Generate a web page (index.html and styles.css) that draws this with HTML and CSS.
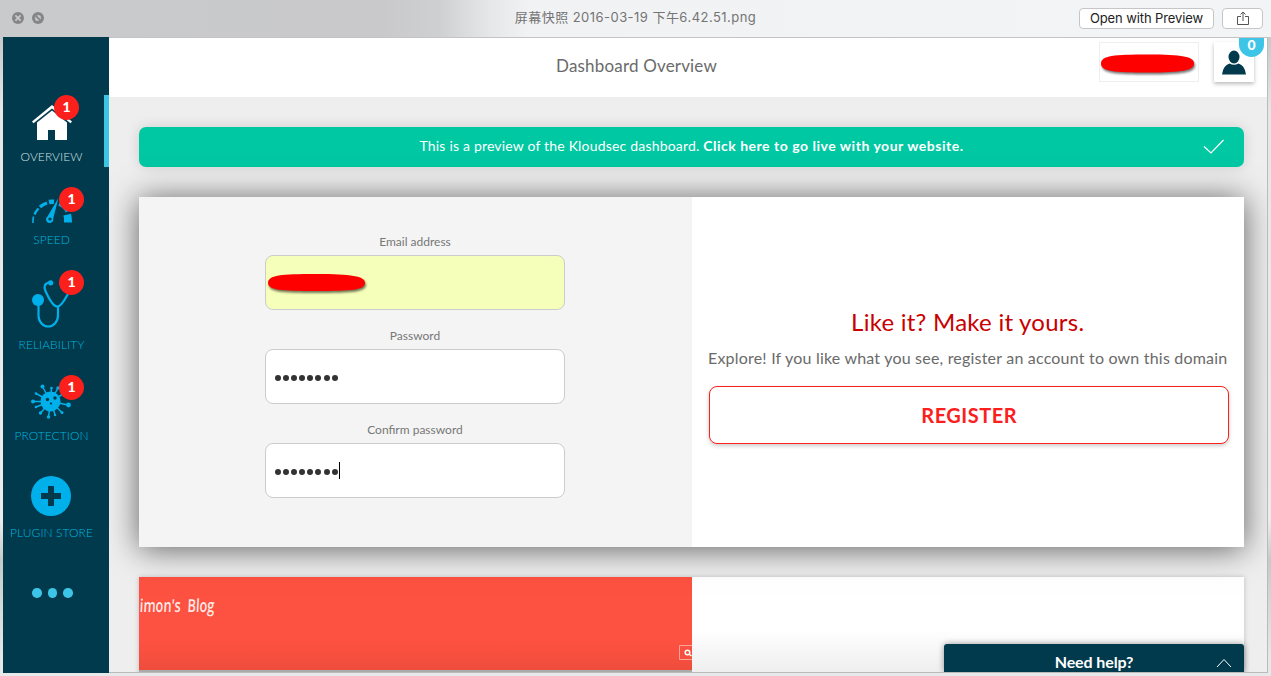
FILE: index.html
```html
<!DOCTYPE html>
<html lang="en">
<head>
<meta charset="utf-8">
<title>Dashboard Overview</title>
<link rel="stylesheet" href="styles.css">
</head>
<body>
<div class="window">
  <header class="titlebar">
    <div class="controls">
      <svg width="12" height="12" viewBox="0 0 12 12"><circle cx="6" cy="6" r="6" fill="#86868a"/><path d="M3.4 3.4l5.2 5.2M8.6 3.4L3.4 8.6" stroke="#cbcbcd" stroke-width="1.6"/></svg>
      <svg width="12" height="12" viewBox="0 0 12 12"><circle cx="6" cy="6" r="6" fill="#86868a"/><path d="M4.6 3.2h2.6a1.6 1.6 0 0 1 1.6 1.6v2.6zM3.2 4.6v2.6a1.6 1.6 0 0 0 1.6 1.6h2.6z" fill="#cbcbcd"/></svg>
    </div>
    <div class="filename">屏幕快照 2016-03-19 下午6.42.51.png</div>
    <div class="actions">
      <button class="tool open">Open with Preview</button>
      <button class="tool share"><svg width="12" height="15" viewBox="0 0 12 15" fill="none" stroke="#555" stroke-width="1"><path d="M4 5.5H.5v8h11v-8H8M6 10V1M3.500 3.500L6 1l2.500 2.500"/></svg></button>
    </div>
  </header>

  <div class="app">
    <nav class="sidebar">
      <a class="item overview">
        <svg width="40" height="37" viewBox="0 0 40 37"><path d="M20 1L0 17.500l1.500 1.800L20 4.500l18.500 14.800L40 17.500z" fill="#fff"/><path d="M20 6.500L5 18.500V36h11V26h7v10h12V18.500z" fill="#fff"/></svg>
        <span class="label">OVERVIEW</span><b class="badge">1</b>
      </a>
      <a class="item speed">
        <svg width="40" height="25" viewBox="0 0 40 25"><g fill="none" stroke="#00b0ea"><path d="M1 25Q.8 21.500 1.500 18.500" stroke-width="1.600"/><path d="M2.500 16.500Q4 13 6.500 10.500" stroke-width="2.400"/><path d="M8 9Q11 6.300 15 5" stroke-width="3.400"/><path d="M17 4Q19.500 3.500 22 3.800" stroke-width="4.400"/><path d="M27.500 5Q33 7 36.500 13" stroke-width="6"/></g><path d="M31.500 17.500l7.500-1.800q1 4 1 8.800h-8q.2-4-.5-7z" fill="#00b0ea"/><path d="M26.500 0L15.500 18.500a3.600 3.600 0 1 0 5.700 2z" fill="#00b0ea"/><circle cx="18" cy="21" r="1.600" fill="#003a4c"/></svg>
        <span class="label">SPEED</span><b class="badge">1</b>
      </a>
      <a class="item reliability">
        <svg width="40" height="48" viewBox="0 0 40 48"><g fill="none" stroke="#00b0ea" stroke-width="2.200"><path d="M6.500 21v14.500c0 6 4.200 11 9.700 11s9.800-5 9.800-11V27M18 2.500C12.500 3 11.500 6.500 13.500 11C17 19 21.500 26.500 25.500 26.500C30 26.500 33.500 18 36.500 13"/></g><circle cx="6" cy="20" r="6" fill="#00b0ea"/><circle cx="18.700" cy="2.800" r="2.600" fill="#00b0ea"/></svg>
        <span class="label">RELIABILITY</span><b class="badge">1</b>
      </a>
      <a class="item protection">
        <svg width="40" height="35" viewBox="0 0 40 35"><g stroke="#00b0ea" stroke-width="1.500"><path d="M19.500 17.500L11.500 2.500M19.500 17.500L20.500 4M19.500 17.500L27 4M19.500 17.500L32 10M19.500 17.500L37.500 21M19.500 17.500L31 28.500M19.500 17.500L24 30.500M19.500 17.500L17.500 33M19.500 17.500L9.500 29M19.500 17.500L5 23M19.500 17.500L1.500 17.500M19.500 17.500L5 9.500"/></g><g fill="#00b0ea"><circle cx="19.500" cy="17.500" r="10"/><circle cx="11.500" cy="2.500" r="2"/><circle cx="20.500" cy="4" r="1.300"/><circle cx="27" cy="4" r="1.700"/><circle cx="37.500" cy="21" r="2.400"/><circle cx="31" cy="28.500" r="1.500"/><circle cx="24" cy="31" r="1.200"/><circle cx="17.500" cy="33" r="1.700"/><circle cx="9.500" cy="29" r="1.700"/><circle cx="5" cy="23" r="1.300"/><circle cx="2" cy="17.500" r="2"/><circle cx="5" cy="9.500" r="1.300"/></g><g fill="#003a4c"><circle cx="16.500" cy="15.500" r="1.700"/><circle cx="24" cy="14" r="1.700"/><circle cx="20" cy="19.500" r="1.100"/></g></svg>
        <span class="label">PROTECTION</span><b class="badge">1</b>
      </a>
      <a class="item plugins">
        <svg width="40" height="40" viewBox="0 0 40 40"><circle cx="20" cy="20" r="20" fill="#00b0ea"/><path d="M17 10h6v7h7v6h-7v7h-6v-7h-7v-6h7z" fill="#003a4c"/></svg>
        <span class="label">PLUGIN STORE</span>
      </a>
      <div class="more"><i></i><i></i><i></i></div>
    </nav>

    <main class="page">
      <div class="topbar">
        <h1>Dashboard Overview</h1>
        <div class="account"><svg width="98" height="26" viewBox="0 0 98 26"><path class="scribble" d="M1 12.500C1 4.500 14 3.500 48 3.500S94 5.500 94 12.500S82 21.500 48 21.500S1 20.500 1 12.500z"/></svg></div>
        <div class="user"><svg width="24" height="25" viewBox="0 0 24 25"><ellipse cx="12" cy="7" rx="5.500" ry="6.500" fill="#003a4c"/><path d="M0 24.500Q1 15.500 7.500 13.500Q12 16 16.500 13.500Q23 15.500 24 24.500z" fill="#003a4c"/></svg><b class="count">0</b></div>
      </div>

      <div class="content">
        <div class="banner">
          <p><span class="lead">This is a preview of the Kloudsec dashboard.</span> <strong>Click here to go live with your website.</strong></p>
          <svg width="22" height="16" viewBox="0 0 22 16" fill="none" stroke="#fff" stroke-width="1.200"><path d="M1 7.500l7 6.500L20.500 1"/></svg>
        </div>

        <section class="signup">
          <form class="fields">
            <label>Email address</label>
            <div class="input filled"><svg width="104" height="24" viewBox="0 0 104 24"><path class="scribble" d="M2 12C2 4 15 3 50 3S99 5 99 12S85 20 50 20S2 19 2 12z"/></svg></div>
            <label>Password</label>
            <div class="input"><span class="dots"><i></i><i></i><i></i><i></i><i></i><i></i><i></i><i></i></span></div>
            <label>Confirm password</label>
            <div class="input"><span class="dots"><i></i><i></i><i></i><i></i><i></i><i></i><i></i><i></i></span><span class="caret"></span></div>
          </form>
          <div class="pitch">
            <h2>Like it? Make it yours.</h2>
            <p>Explore! If you like what you see, register an account to own this domain</p>
            <button class="register">REGISTER</button>
          </div>
        </section>

        <section class="site">
          <div class="preview">
            <div class="blog">imon's&nbsp; Blog</div>
            <div class="search"><svg width="13" height="15" viewBox="0 0 13 15" fill="none" stroke="#ffa59a"><path d="M13 .5H.5v14H13"/><g stroke="#fff" stroke-width="1.500"><circle cx="8.500" cy="7.500" r="2.300"/><path d="M10.500 9.500l2 1.500"/></g></svg></div>
          </div>
          <div class="blank"></div>
        </section>
      </div>

      <div class="help"><span>Need help?</span><svg width="16" height="10" viewBox="0 0 16 10" fill="none" stroke="#fff"><path d="M1 9l7-7.500L15 9"/></svg></div>
    </main>
  </div>
</div>
</body>
</html>
```
FILE: styles.css
```css
* { box-sizing: border-box; }
body { margin: 0; font-family: Lato, "Liberation Sans", sans-serif; color: #6a6a6a; overflow: hidden; }
h1, h2, p { margin: 0; font-weight: 400; }
button { font: inherit; padding: 0; }
svg { display: block; flex: none; }

.window { width: 1271px; height: 676px; padding: 0 3px 3px; background: linear-gradient(#c9cacc 40px, #e6e6e7 110px, #ececee 520px, #c5cbcb 560px, #e6e9ea 660px); display: flex; flex-direction: column; }
.titlebar { height: 37px; flex: none; display: grid; grid-template-columns: 300px 1fr 300px; align-items: center; margin: 0 -3px; padding: 0 3px; background: linear-gradient(90deg, #c9cacc 0, #c9c9cb 380px, #cfd0d1 440px, #e6e7e9 490px, #f1f2f4 530px, #f2f4f5 100%); }
.controls { display: flex; gap: 8px; padding-left: 9px; margin-top: -1px; }
.filename { text-align: center; font: 13px/20px Inter, "Noto Sans CJK SC", sans-serif; letter-spacing: .46px; color: #747474; margin-top: -4px; white-space: nowrap; }
.actions { display: flex; justify-content: flex-end; gap: 8px; padding-right: 5px; }
.tool { height: 21px; background: #fff; border: 1px solid #c6c6c8; border-radius: 4px; color: #222; display: flex; align-items: center; justify-content: center; }
.open { width: 135px; font: 13px/18px Inter, "Liberation Sans", sans-serif; letter-spacing: -.1px; padding-bottom: 1px; }
.share { width: 41px; }

.app { flex: 1; display: flex; min-height: 0; }
.sidebar { width: 106px; background: #003a4c; padding-top: 58px; color: #00b4de; }
.item { position: relative; display: flex; flex-direction: column; align-items: center; justify-content: flex-end; padding: 0 9px 2px 0; gap: 9px; }
.overview { height: 72px; gap: 8px; color: #d0e0e4; border-right: 5px solid #3cc5e6; padding-right: 4px; }
.speed { height: 83px; }
.reliability { height: 105px; }
.protection { height: 91px; }
.plugins { height: 97px; }
.protection svg, .plugins svg { margin-right: 1px; }
.label { font-size: 12px; line-height: 16px; font-weight: 300; letter-spacing: .05px; white-space: nowrap; }
.badge { position: absolute; left: 56px; top: 20px; width: 25px; height: 25px; border-radius: 50%; background: #fc201c; color: #fff; font: 900 14px/24px Lato, sans-serif; text-align: center; }
.overview .badge { left: 51px; top: 0; }
.more { display: flex; gap: 6px; padding: 45px 0 0 29px; }
.more i { width: 9.500px; height: 9.500px; border-radius: 50%; background: #3cc5e6; }

.page { position: relative; flex: 1; display: flex; flex-direction: column; min-width: 0; overflow: hidden; background: #eee; border-top: 1px solid #c3c3c5; border-right: 1px solid #bbb; border-bottom: 1px solid #bbb; }
.topbar { height: 59px; flex: none; background: #fff; display: grid; grid-template-columns: 1fr 100px 40px; column-gap: 15px; padding-right: 13px; align-items: start; }
h1 { font-size: 17px; line-height: 24px; padding: 16px 0 0 80px; text-align: center; letter-spacing: .18px; }
.account { width: 100px; height: 40px; border: 1px solid #eee; margin-top: 4px; padding-top: 8px; }
.account svg, .input svg { overflow: visible; }
.scribble { fill: #f00; filter: drop-shadow(1px 2px 1px #0008); }
.user { position: relative; width: 40px; height: 40px; margin-top: 4px; background: #fff; box-shadow: 0 2px 4px #0004; padding: 8px; }
.count { position: absolute; left: 25px; top: -4px; width: 25px; height: 19px; border-radius: 0 0 12.500px 12.500px; background: #3cc5e6; color: #fff; font-size: 14px; font-weight: 900; line-height: 14px; text-align: center; }

.content { padding: 30px 23px 0 30px; display: flex; flex-direction: column; gap: 30px; }
.banner { height: 40px; border-radius: 7px; background: #00c8a2; color: #fff; display: grid; grid-template-columns: 1fr 41px; align-items: center; padding-left: 41px; box-shadow: 0 0 14px #0002; }
.banner p { font-size: 14px; line-height: 20px; text-align: center; padding-bottom: 2px; white-space: nowrap; }
.lead { letter-spacing: .19px; }
.banner strong { letter-spacing: .52px; }
.signup { position: relative; height: 350px; background: #fff; display: grid; grid-template-columns: 553px 1fr; box-shadow: 0 2px 30px #0009; }
.fields { background: #f4f4f4; display: flex; flex-direction: column; align-items: center; padding: 36px 1px 0 0; }
.fields label { font-size: 12px; line-height: 18px; color: #777; margin-bottom: 4px; }
.input { width: 300px; height: 55px; margin: 0 1px 17px 0; border: 1px solid #ccc; border-radius: 8px; background: #fff; display: flex; align-items: center; padding-left: 9.500px; }
.filled { background: #f5ffb9; padding-left: 0; }
.dots { display: flex; gap: 2.100px; padding-top: 2px; }
.dots i { width: 6px; height: 6px; border-radius: 50%; background: #333; }
.caret { width: 1px; height: 17px; background: #000; margin-left: 1px; }
.pitch { padding: 109px 15px 0 17px; text-align: center; }
h2 { font-size: 24px; line-height: 32px; color: #c90000; letter-spacing: .25px; padding-right: 3px; }
.pitch p { font-size: 16px; line-height: 22px; margin: 9px 2px 0 -1px; white-space: nowrap; letter-spacing: .2px; }
.register { width: 520px; height: 58px; margin-top: 17px; background: #fff; border: 1px solid #fc201c; border-radius: 8px; color: #fc201c; font-size: 20px; font-weight: 700; letter-spacing: .5px; box-shadow: 0 2px 4px #0003; }

.site { height: 130px; background: #fff; display: grid; grid-template-columns: 553px 1fr; box-shadow: 0 0 5px #0003; }
.preview { height: 93px; background: linear-gradient(#fd5141 70%, #ef4d3c); display: flex; justify-content: space-between; overflow: hidden; box-shadow: 0 2px #aaa; }
.blog { color: #ffe9e6; font: 600 18px/24px "Open Sans", sans-serif; padding-top: 16px; transform: scaleX(.71) skewX(-4deg); transform-origin: left; }
.search { padding-top: 68px; }
.blank { height: 96px; background: linear-gradient(#fff 55%, #eee); }
.help { position: absolute; right: 23px; bottom: 0; width: 300px; height: 28px; border-radius: 3px 3px 0 0; background: #003a4c; color: #fff; display: grid; grid-template-columns: 1fr 28px; padding-left: 28px; align-items: center; text-align: center; font-size: 16px; font-weight: 700; letter-spacing: -.1px; box-shadow: 0 0 6px #0006; }
.help svg { margin-top: 10px; }
.help span { line-height: 20px; padding-top: 8px; }
```
